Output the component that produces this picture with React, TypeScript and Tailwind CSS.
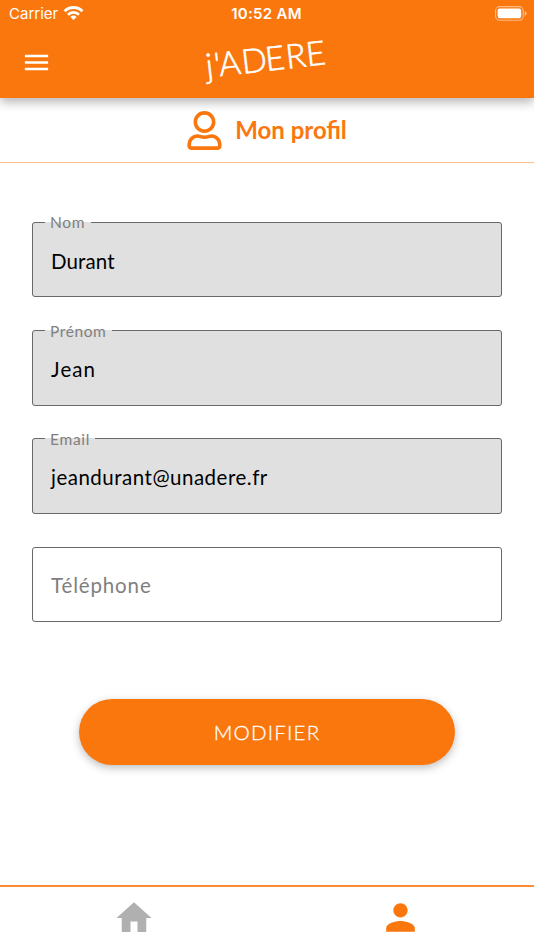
import { FaRegUser } from "react-icons/fa";
import { MdHome, MdMenu, MdPerson } from "react-icons/md";

type FieldType = {
  label: string;
  value: string;
  legendClass: string;
  valueClass: string;
}

const fields: FieldType[] = [
  { label: 'Nom', value: 'Durant', legendClass: 'w-[46px] tracking-[0.7px]', valueClass: 'tracking-[0.1px]' },
  { label: 'Prénom', value: 'Jean', legendClass: 'w-[67px] tracking-[0.6px]', valueClass: 'tracking-[1.1px]' },
  { label: 'Email', value: 'jeandurant@unadere.fr', legendClass: 'w-[50px] tracking-[0.7px]', valueClass: 'tracking-[0.5px]' },
];

const StatusBar = () => {
  return (
    <div className="grid grid-cols-3 items-center h-7 pl-[9px] pr-[7px] font-['Inter',sans-serif] text-white">
      <div className="flex items-center gap-[5px]">
        <span className="text-[15px] leading-7">Carrier</span>
        <svg width="21" height="16" viewBox="0 0 21 16" fill="none" stroke="white" className="-mt-0.5">
          <path d="M1.6 6.2a12.6 12.6 0 0 1 17.8 0" strokeWidth="2.9" />
          <path d="M5 9.7a7.8 7.8 0 0 1 11 0" strokeWidth="2.7" />
          <path d="M10.5 15 7.4 11.9a4.4 4.4 0 0 1 6.2 0z" fill="white" stroke="none" />
        </svg>
      </div>
      <span className="-ml-[3px] text-center text-[15px] font-semibold leading-7 tracking-[0.3px] whitespace-nowrap">10:52 AM</span>
      <svg width="32" height="15" viewBox="0 0 32 15" className="justify-self-end -mt-0.5">
        <rect x="0.6" y="0.6" width="27.6" height="13.6" rx="4" fill="none" stroke="white" strokeOpacity="0.5" strokeWidth="1.1" />
        <rect x="2.6" y="2.5" width="23.6" height="9.8" rx="2.2" fill="white" />
        <path d="M29.7 5v5c1.3-.5 1.9-1.4 1.9-2.5s-.6-2-1.9-2.5z" fill="white" fillOpacity="0.55" />
      </svg>
    </div>
  )
}

const Logo = () => {
  return (
    <svg width="140" height="68" viewBox="0 0 140 68" className="mx-auto overflow-visible" aria-label="j'ADERE">
      <text
        transform="translate(10 49.8) rotate(-6.5)"
        x="0 8.5 13 36 60 80.5 101"
        y="0"
        fill="white"
        stroke="white"
        strokeWidth="0.6"
        className="font-['Lato',sans-serif] font-light text-[33.5px]"
      >
        j'ADERE
      </text>
    </svg>
  )
}

const Field = ({ label, value, legendClass, valueClass }: FieldType) => {
  return (
    <fieldset className="h-[84px] -mt-[9px] px-3 rounded-[3px] border border-[#686868] bg-[#e0e0e0]">
      <legend className={`h-[18px] pl-[5px] text-[15.5px] leading-[18px] text-[#7f7f7f] whitespace-nowrap ${legendClass}`}>
        {label}
      </legend>
      <div className={`pl-[6px] pt-[14.5px] text-[20.5px] leading-[30px] text-black ${valueClass}`}>{value}</div>
    </fieldset>
  )
}

const App = () => {
  return (
    <div className="flex flex-col w-full h-[950px] overflow-hidden bg-white font-['Lato',sans-serif]">
      <header className="relative h-[98px] shrink-0 bg-[#fa770e] shadow-[0_4px_10px_rgba(0,0,0,0.3)]">
        <StatusBar />
        <div className="grid grid-cols-[80px_1fr_80px] items-center h-[68px]">
          <MdMenu className="ml-[21px] size-[31px] text-white" />
          <Logo />
        </div>
      </header>

      <div className="flex items-center justify-center gap-[13px] h-[65px] shrink-0 border-b border-[#fcc08f] text-[#fa770e]">
        <FaRegUser className="w-[35px] h-[39px]" />
        <h1 className="text-[24px] font-bold leading-8">Mon profil</h1>
      </div>

      <main className="flex flex-col gap-[33.4px] px-8 pt-[59.2px]">
        {fields.map((field) => (
          <Field key={field.label} {...field} />
        ))}
        <div className="flex items-center h-[75px] px-[18px] pt-px rounded-[3px] border border-[#686868] text-[20.5px] tracking-[0.85px] text-[#7f7f7f]">
          Téléphone
        </div>
        <button className="self-center w-[376px] h-[66px] mt-[43.5px] rounded-full bg-[#fa770e] text-[20.5px] font-light tracking-[1.2px] text-white [-webkit-text-stroke:0.3px_white] shadow-[0_3px_9px_rgba(0,0,0,0.25)]">
          MODIFIER
        </button>
      </main>

      <nav className="grid grid-cols-2 justify-items-center h-[65px] mt-auto shrink-0 border-t-2 border-[#fd8c36]">
        <MdHome className="mt-[10px] size-[42px] text-[#b0b0b0]" />
        <MdPerson className="mt-[9px] size-[43px] text-[#fa770e]" />
      </nav>
    </div>
  )
}

export default App
